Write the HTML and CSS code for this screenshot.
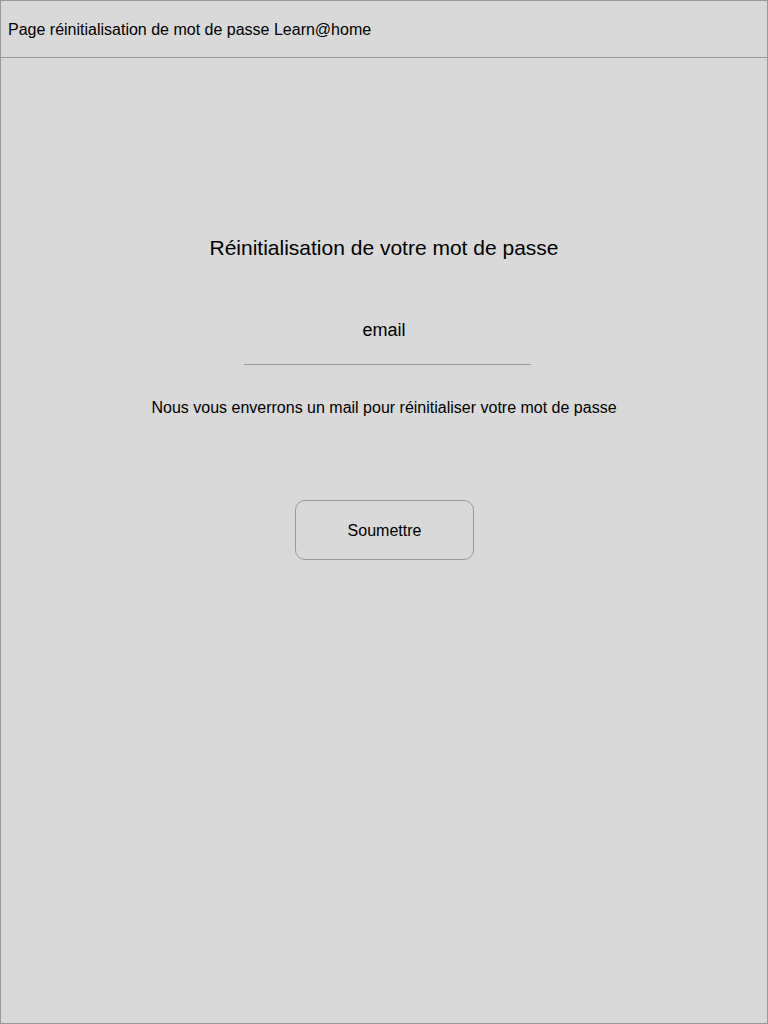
FILE: index.html
```html
<!DOCTYPE html>
<html lang="fr">
<head>
<meta charset="utf-8">
<title>Réinitialisation</title>
<link rel="stylesheet" href="styles.css">
</head>
<body>
<div class="page">
  <header class="topbar">Page réinitialisation de mot de passe Learn@home</header>
  <main class="content">
    <h1 class="title">Réinitialisation de votre mot de passe</h1>
    <div class="field-label">email</div>
    <div class="field-line"></div>
    <p class="hint">Nous vous enverrons un mail pour réinitialiser votre mot de passe</p>
    <button class="submit" type="button">Soumettre</button>
  </main>
</div>
</body>
</html>
```
FILE: styles.css
```css
html, body {
  margin: 0;
  padding: 0;
}
body {
  font-family: "Liberation Sans", Arial, sans-serif;
  color: #000;
  background: #d9d9d9;
}
.page {
  width: 768px;
  height: 1024px;
  box-sizing: border-box;
  border: 1px solid #999;
  background: #d9d9d9;
  display: flex;
  flex-direction: column;
}
.topbar {
  box-sizing: border-box;
  height: 57px;
  border-bottom: 1px solid #999;
  display: flex;
  align-items: center;
  padding: 2px 0 0 7px;
  font-size: 16px;
}
.content {
  display: flex;
  flex-direction: column;
  align-items: center;
  padding-top: 178px;
}
.title {
  margin: 0;
  font-size: 21px;
  font-weight: normal;
  line-height: 24px;
}
.field-label {
  margin-top: 59px;
  font-size: 18px;
  line-height: 22px;
}
.field-line {
  margin-top: 23px;
  margin-left: 7px;
  width: 287px;
  height: 1px;
  background: #999;
}
.hint {
  margin: 33px 0 0;
  font-size: 16px;
  line-height: 20px;
}
.submit {
  margin-top: 82px;
  margin-left: 1px;
  width: 179px;
  height: 60px;
  border: 1px solid #999;
  border-radius: 10px;
  background: transparent;
  font-family: inherit;
  font-size: 16px;
  color: #000;
  padding: 1px 0 0;
}
```
